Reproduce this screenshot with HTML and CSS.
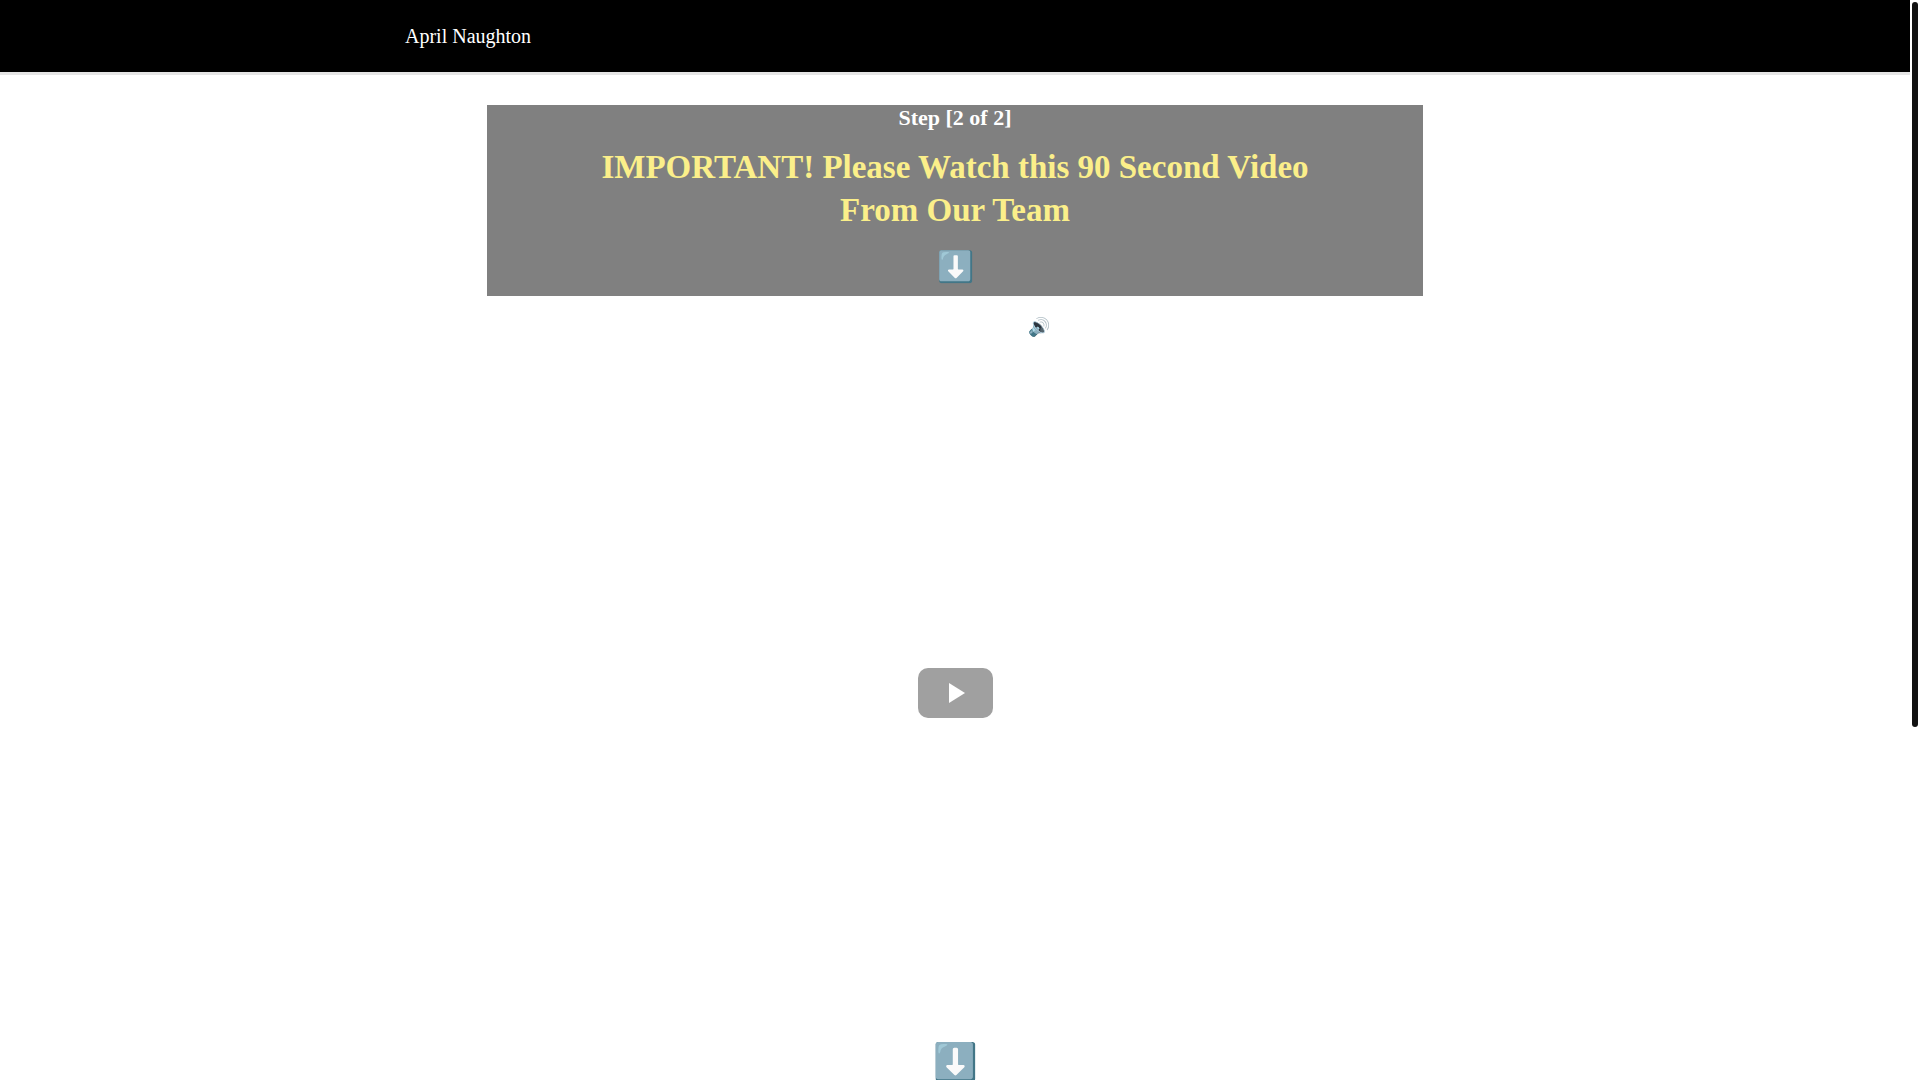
FILE: index.html
```html
<!DOCTYPE html>
<html lang="en">
<head>
    <meta charset="UTF-8">
    <meta name="viewport" content="width=device-width, initial-scale=1.0">
    <title>April Naughton</title>
    <link rel="stylesheet" href="styles.css">
</head>
<body>
    <header class="header">
        <div class="header-inner">April Naughton</div>
    </header>

    <main class="content">
        <section class="headline">
            <h3 class="step">Step [2 of 2]</h3>
            <h1 class="title">IMPORTANT! Please Watch this 90 Second Video From Our Team</h1>
            <p class="arrow">⬇️</p>
        </section>

        <p class="sound-note">🔊</p>

        <div class="video">
            <button class="play-btn" type="button" aria-label="Play video">
                <svg width="16" height="20" viewBox="0 0 16 20" aria-hidden="true">
                    <path d="M0 0L16 10L0 20Z" fill="#fff"/>
                </svg>
            </button>
        </div>

        <p class="arrow arrow-large">⬇️</p>
    </main>

    <div class="scrollbar"><div class="scroll-thumb"></div></div>
</body>
</html>
```
FILE: styles.css
```css
* {
    margin: 0;
    padding: 0;
    box-sizing: border-box;
}

body {
    font-family: "Liberation Serif", "Times New Roman", serif;
    background: #fff;
    color: #fff;
    height: 100vh;
    padding-right: 10px;
    overflow: hidden;
}

.header {
    background: #000;
    border-bottom: 3px solid #e5e5e5;
}

.header-inner {
    max-width: 1100px;
    margin: 0 auto;
    padding: 24px 0;
    font-size: 20px;
    line-height: 24px;
}

.content {
    max-width: 936px;
    margin: 30px auto 0;
    text-align: center;
}

.headline {
    background: #808080;
    padding-bottom: 6px;
}

.step {
    font-size: 22px;
    line-height: 26px;
    margin-bottom: 15px;
}

.title {
    max-width: 780px;
    margin: 0 auto 12px;
    font-size: 33px;
    line-height: 43px;
    color: #fbef8a;
}

.arrow {
    font-size: 30px;
    line-height: 46px;
}

.sound-note {
    margin: 20px 0 8px;
    padding-left: 168px;
    font-size: 18px;
    line-height: 22px;
}

.video {
    display: flex;
    align-items: center;
    justify-content: center;
    aspect-ratio: 27 / 20;
}

.play-btn {
    display: flex;
    align-items: center;
    justify-content: center;
    width: 75px;
    height: 50px;
    padding-left: 4px;
    border: none;
    border-radius: 10px;
    background: #a0a0a0;
    cursor: pointer;
}

.arrow-large {
    font-size: 36px;
}

.scrollbar {
    position: fixed;
    top: 0;
    right: 0;
    width: 10px;
    height: 100%;
    padding: 2px;
    background: #fff;
}

.scroll-thumb {
    height: calc(67% + 4px);
    border-radius: 3px;
    background: #111;
}
```
